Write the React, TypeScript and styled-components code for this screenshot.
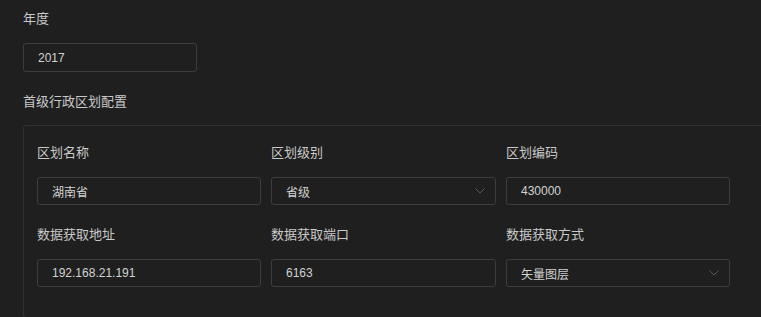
import * as React from 'react';
import styled, { createGlobalStyle } from 'styled-components';

const GlobalStyle = createGlobalStyle`
    html, body {
        margin: 0;
        padding: 0;
        background: #1f1f1f;
        overflow: hidden;
    }
    body {
        font-family: "Liberation Sans", "Noto Sans CJK SC", sans-serif;
    }
`;

const Page = styled.div`
    padding: 9px 0 0 23px;
    width: 800px;
`;

const Label = styled.div<{ $gap?: number }>`
    height: 20px;
    line-height: 20px;
    font-size: 13px;
    color: #c9c9c9;
    margin-bottom: ${p => p.$gap ?? 14}px;
`;

const Field = styled.div<{ $width?: number; $height?: number }>`
    box-sizing: border-box;
    width: ${p => (p.$width ? `${p.$width}px` : '100%')};
    height: ${p => p.$height ?? 28}px;
    border: 1px solid #3d3d3d;
    border-radius: 3px;
    padding: 0 10px 0 14px;
    display: flex;
    align-items: center;
    justify-content: space-between;
    font-size: 12px;
    color: #d2d2d2;
    background: #1f1f1f;
`;

const Section = styled.div`
    margin-bottom: 20px;
`;

const Panel = styled.div`
    box-sizing: border-box;
    border: 1px solid #303030;
    border-radius: 3px;
    padding: 17px 0 30px 13px;
    width: 790px;
`;

const Grid = styled.div`
    display: grid;
    grid-template-columns: 224px 225px 224px;
    column-gap: 10px;
    row-gap: 20px;
`;

const Chevron = () => (
    <svg width="10" height="6" viewBox="0 0 10 6" fill="none">
        <path d="M0.5 0.5 L5 5 L9.5 0.5" stroke="#5a5a5a" strokeWidth="1" />
    </svg>
);

interface ItemProps {
    label: string;
    value: string;
    select?: boolean;
}

const Item = ({ label, value, select }: ItemProps) => (
    <div>
        <Label>{label}</Label>
        <Field>
            <span>{value}</span>
            {select && <Chevron />}
        </Field>
    </div>
);

const items: ItemProps[] = [
    { label: '区划名称', value: '湖南省' },
    { label: '区划级别', value: '省级', select: true },
    { label: '区划编码', value: '430000' },
    { label: '数据获取地址', value: '192.168.21.191' },
    { label: '数据获取端口', value: '6163' },
    { label: '数据获取方式', value: '矢量图层', select: true },
];

export default function App() {
    return (
        <>
            <GlobalStyle />
            <Page>
                <Section>
                    <Label>年度</Label>
                    <Field $width={174} $height={29}>
                        <span>2017</span>
                    </Field>
                </Section>
                <Label $gap={13}>首级行政区划配置</Label>
                <Panel>
                    <Grid>
                        {items.map(item => (
                            <Item key={item.label} {...item} />
                        ))}
                    </Grid>
                </Panel>
            </Page>
        </>
    );
}
